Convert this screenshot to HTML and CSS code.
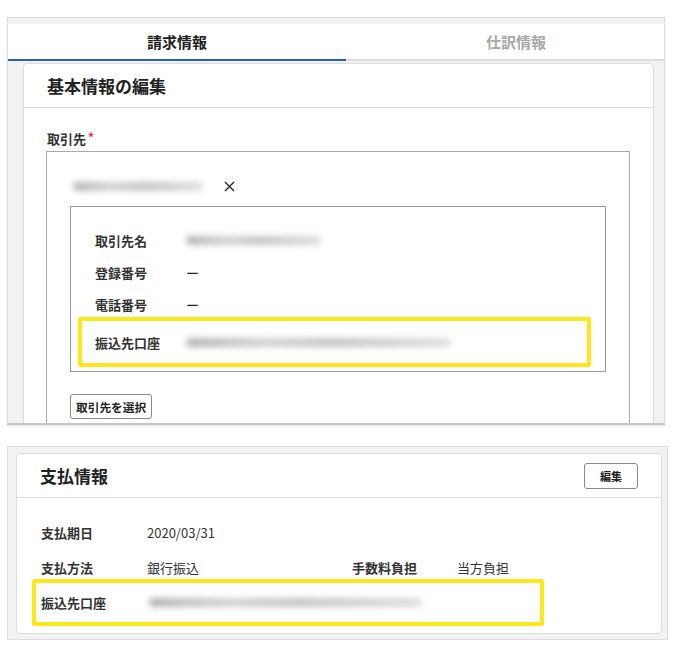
FILE: index.html
```html
<!DOCTYPE html>
<html lang="ja">
<head>
    <meta charset="UTF-8">
    <meta name="viewport" content="width=device-width, initial-scale=1.0">
    <title>請求情報</title>
    <link rel="stylesheet" href="styles.css">
</head>
<body>
    <div class="frame frame-edit">
        <div class="tabs">
            <div class="tab active">請求情報</div>
            <div class="tab">仕訳情報</div>
        </div>

        <section class="card">
            <header class="card-head">
                <h2>基本情報の編集</h2>
            </header>
            <div class="card-body">
                <div class="field-label">取引先<span class="req">*</span></div>
                <div class="picker">
                    <div class="picked">
                        <span class="redact w-picked"></span>
                        <svg class="clear" width="11" height="11" viewBox="0 0 11 11">
                            <path d="M1 1 L10 10 M10 1 L1 10" stroke="#222" stroke-width="1.4" fill="none"/>
                        </svg>
                    </div>
                    <div class="partner">
                        <div class="row">
                            <span class="key">取引先名</span>
                            <span class="redact w-partner"></span>
                        </div>
                        <div class="row">
                            <span class="key">登録番号</span>
                            <span class="val">ー</span>
                        </div>
                        <div class="row">
                            <span class="key">電話番号</span>
                            <span class="val">ー</span>
                        </div>
                        <div class="row hl">
                            <span class="key">振込先口座</span>
                            <span class="redact w-account"></span>
                        </div>
                    </div>
                    <button class="btn">取引先を選択</button>
                </div>
            </div>
        </section>
    </div>

    <div class="frame frame-pay">
        <section class="card">
            <header class="card-head">
                <h2>支払情報</h2>
                <button class="btn btn-edit">編集</button>
            </header>
            <div class="pay-body">
                <div class="pay-row">
                    <span class="pay-key">支払期日</span>
                    <span class="pay-val">2020/03/31</span>
                </div>
                <div class="pay-row">
                    <span class="pay-key">支払方法</span>
                    <span class="pay-val">銀行振込</span>
                    <span class="pay-key pay-key2">手数料負担</span>
                    <span class="pay-val">当方負担</span>
                </div>
                <div class="pay-row hl">
                    <span class="pay-key">振込先口座</span>
                    <span class="redact w-account2"></span>
                </div>
            </div>
        </section>
    </div>
</body>
</html>
```

FILE: styles.css
```css
* {
    box-sizing: border-box;
}

body {
    margin: 0;
    background: #fff;
    color: #333;
    font-family: "Noto Sans CJK JP", "Noto Sans", sans-serif;
    font-size: 13px;
}

h2 {
    margin: 0;
    font-size: 17px;
    font-weight: bold;
    color: #222;
}

.frame {
    background: #f2f2f2;
    border: 1px solid #dcdcdc;
    margin-left: 7px;
}

/* top panel is a cut-off view of a longer form */
.frame-edit {
    margin-top: 17px;
    width: 658px;
    height: 408px;
    padding-top: 6px;
    overflow: hidden;
    border-bottom: 2px solid #c6c6c6;
    box-shadow: 0 1px 2px rgba(0, 0, 0, 0.12);
}

.frame-pay {
    margin-top: 21px;
    width: 661px;
    padding: 6px 5px 5px 8px;
}

/* tabs */
.tabs {
    display: flex;
    background: #fff;
}

.tab {
    flex: 0 0 340px;
    height: 37px;
    line-height: 35px;
    text-align: center;
    font-size: 15px;
    font-weight: bold;
    color: #a8a8a8;
    border-bottom: 2px solid #dcdcdc;
}

.tab.active {
    flex-basis: 338px;
    color: #222;
    border-bottom-color: #1f5fcf;
}

/* cards */
.card {
    background: #fff;
    border: 1px solid #dcdcdc;
    border-radius: 4px;
}

.frame-edit .card {
    margin: 2px 10px 0 15px;
}

.card-head {
    display: flex;
    align-items: center;
    justify-content: space-between;
    height: 44px;
    padding: 0 23px;
    border-bottom: 1px solid #dcdcdc;
}

.frame-edit .card-head {
    padding-top: 0;
}

.card-body {
    padding: 22px 23px 0 22px;
}

.field-label {
    font-size: 13px;
    font-weight: bold;
    line-height: 18px;
    height: 18px;
    padding-left: 1px;
    margin-bottom: 3px;
}

.req {
    color: #e0303a;
    font-size: 12px;
    line-height: 0;
    margin-left: 2px;
    vertical-align: 2px;
}

/* selected partner */
.picker {
    width: 584px;
    border: 1px solid #aaa;
    padding: 19px 23px 60px 23px;
}

.picked {
    display: flex;
    align-items: center;
    height: 30px;
}

.picked .redact {
    margin-left: 3px;
}

.clear {
    margin-left: 21px;
}

.partner {
    margin-top: 5px;
    border: 1px solid #999;
    padding: 17px 14px 4px 24px;
}

.row {
    display: flex;
    align-items: center;
    height: 32px;
}

.key {
    flex: 0 0 91px;
    font-weight: bold;
    color: #333;
}

.val {
    color: #222;
}

.hl {
    border: 4px solid #ffe81a;
    border-radius: 2px;
}

.row.hl {
    height: 50px;
    margin: -3px 0 0 -17px;
    padding-left: 13px;
}

.btn {
    height: 25px;
    margin-top: 22px;
    padding: 0 5px;
    background: #fff;
    border: 1px solid #8a8a8a;
    border-radius: 3px;
    font-family: inherit;
    font-size: 11.7px;
    font-weight: bold;
    color: #222;
}

.btn-edit {
    margin-top: 0;
    height: 26px;
    padding: 0 15px;
    font-size: 11px;
}

/* payment details */
.pay-body {
    padding: 17px 0 7px 24px;
}

.pay-row {
    display: flex;
    align-items: center;
    height: 35px;
}

.pay-key {
    flex: 0 0 106px;
    font-weight: bold;
}

.pay-key2 {
    flex-basis: 105px;
}

.pay-val {
    flex: 0 0 205px;
}

.pay-val:last-child {
    flex: none;
}

.pay-row.hl {
    width: 512px;
    height: 47px;
    margin: -6px 0 0 -9px;
    padding-left: 5px;
}

/* masked values */
.redact {
    display: inline-block;
    height: 9px;
    border-radius: 5px;
    background: linear-gradient(90deg, #a4a4a4, #cbcbcb 30%, #bababa 55%, #d8d8d8);
    filter: blur(3px);
    opacity: 0.85;
}

.w-picked {
    width: 130px;
}

.w-partner {
    width: 135px;
}

.w-account {
    width: 265px;
}

.w-account2 {
    width: 273px;
    margin-left: 2px;
}
```
